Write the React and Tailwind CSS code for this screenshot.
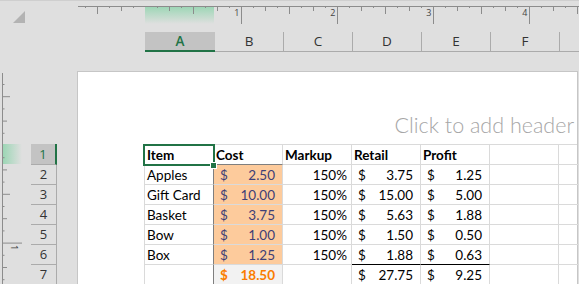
import React from "react";

const items = [
  ["Apples", "2.50", "150%", "3.75", "1.25"],
  ["Gift Card", "10.00", "150%", "15.00", "5.00"],
  ["Basket", "3.75", "150%", "5.63", "1.88"],
  ["Bow", "1.00", "150%", "1.50", "0.50"],
  ["Box", "1.25", "150%", "1.88", "0.63"],
];

function TopRuler() {
  const ticks = [];
  for (let k = -5; 145.5 + 12 * k < 579; k++) {
    if (k === 0) continue;
    const x = 145.5 + 12 * k;
    const len = k % 8 === 0 ? 18 : k % 4 === 0 ? 8 : k % 2 === 0 ? 5 : 2;
    ticks.push(
      <line key={k} x1={x} x2={x} y1={6} y2={6 + len} stroke="#8c8c8c" strokeWidth="1" />
    );
    if (k > 0 && k % 8 === 0) {
      ticks.push(
        <text key={"t" + k} x={x - 2} y={16} textAnchor="end" fontSize="9" fill="#444" fontFamily="Open Sans, sans-serif">
          {k / 8}
        </text>
      );
    }
  }
  return (
    <svg width="579" height="24" className="block">
      <defs>
        <linearGradient id="rg" x1="0" y1="0" x2="0" y2="1">
          <stop offset="0" stopColor="#9cd6b5" />
          <stop offset="1" stopColor="#dfdfdf" />
        </linearGradient>
      </defs>
      <line x1="0" x2="579" y1="0.5" y2="0.5" stroke="#cfcfcf" />
      <polygon points="25,11 25,23 13,23" fill="#b3b3b3" />
      <rect x="145" y="6.5" width="69" height="17.5" fill="url(#rg)" />
      <line x1="78" x2="579" y1="6.5" y2="6.5" stroke="#8c8c8c" />
      {ticks}
    </svg>
  );
}

function SideRuler() {
  const ticks = [];
  for (let k = -5; 145.5 + 12.2 * k < 284; k++) {
    if (k === 0) continue;
    const y = 145.5 + 12.2 * k - 71;
    const len = k % 8 === 0 ? 19 : k % 4 === 0 ? 7 : k % 2 === 0 ? 4 : 1.5;
    ticks.push(
      <line key={k} x1={3} x2={3 + len} y1={y} y2={y} stroke="#8c8c8c" strokeWidth="1" />
    );
    if (k > 0 && k % 8 === 0) {
      ticks.push(
        <text key={"t" + k} x={0} y={0} fontSize="9" fill="#444" fontFamily="Open Sans, sans-serif" transform={`translate(11 ${y + 2}) rotate(90)`}>
          {k / 8}
        </text>
      );
    }
  }
  return (
    <svg width="31" height="213" className="block shrink-0">
      <defs>
        <linearGradient id="sg" x1="0" y1="0" x2="1" y2="0">
          <stop offset="0" stopColor="#9cd6b5" />
          <stop offset="1" stopColor="#dfdfdf" />
        </linearGradient>
      </defs>
      <rect x="3" y="73" width="19" height="20" fill="url(#sg)" />
      <line x1="2.5" x2="2.5" y1="2" y2="213" stroke="#8c8c8c" />
      {ticks}
    </svg>
  );
}

function Money({ value, className = "" }) {
  return (
    <div className={`flex h-full items-end justify-between pl-[6px] pr-[7px] leading-[18px] ${className}`}>
      <span>$</span>
      <span>{value}</span>
    </div>
  );
}

export default function App() {
  const cols = ["B", "C", "D", "E", "F", ""];
  const cell = "h-full w-[69px] shrink-0 border-r border-b border-[#dadada]";

  return (
    <div className="relative h-[284px] w-[579px] overflow-hidden bg-[#dfdfdf] font-['Lato',sans-serif] text-black">
      <TopRuler />
      <div className="h-[8px]" />

      {/* column headers */}
      <div className="flex h-[20px] pl-[145px] font-['Open_Sans',sans-serif] text-[13.5px]">
        <div className="flex w-[70px] shrink-0 items-center justify-center border-b-2 border-[#217346] bg-[#c3c3c3] font-semibold text-[#217346]">
          A
        </div>
        {cols.map((c, i) => (
          <div key={i} className="flex w-[69px] shrink-0 items-center justify-center border-r border-b border-[#ababab] text-[#333]">
            {c}
          </div>
        ))}
      </div>
      <div className="h-[19px]" />

      <div className="flex h-[213px]">
        <SideRuler />

        {/* row headers */}
        <div className="w-[26px] shrink-0 font-['Open_Sans',sans-serif] text-[13px]">
          <div className="h-[73px]" />
          <div className="flex h-[21px] items-end justify-center border-r-2 border-b border-r-[#217346] border-b-[#ababab] bg-[#c3c3c3] pb-[1px] leading-[18px] text-[#217346]">
            1
          </div>
          {[2, 3, 4, 5, 6, 7].map((n) => (
            <div key={n} className="flex h-[20px] items-end justify-center border-r border-b border-[#ababab] pb-[1px] leading-[18px] text-[#333]">
              {n}
            </div>
          ))}
        </div>

        <div className="w-[20px] shrink-0" />

        {/* page */}
        <div className="w-[501px] shrink-0 border-l border-t border-r border-[#c6c6c6] bg-white">
          <div className="flex h-[72px] items-end justify-end pr-[3px] pb-[8px] text-[21.5px] leading-none font-light text-[#a6a6a6]">
            Click to add header
          </div>

          <div className="relative ml-[66px] border-l border-t border-[#dadada] text-[13.5px]">
            {/* header row */}
            <div className="flex h-[20px] font-bold">
              {["Item", "Cost", "Markup", "Retail", "Profit", "", ""].map((h, i) => (
                <div key={i} className={`${cell} flex items-end pl-[2px] leading-[18px] ${i === 1 ? "border-b-[#7f7f7f]" : ""}`}>
                  {h}
                </div>
              ))}
            </div>

            {items.map((r, ri) => (
              <div key={r[0]} className="flex h-[20px]">
                <div className={`${cell} flex items-end border-r-[#7f7f7f] pl-[2px] leading-[18px]`}>{r[0]}</div>
                <div className={`${cell} border-[#7f7f7f] bg-[#fdcb9c]`}>
                  <Money value={r[1]} className="text-[#3f3f76]" />
                </div>
                <div className={`${cell} flex items-end justify-end pr-[4px] leading-[18px]`}>{r[2]}</div>
                <div className={`${cell} ${ri === 4 ? "border-b-black" : ""}`}>
                  <Money value={r[3]} />
                </div>
                <div className={`${cell} ${ri === 4 ? "border-b-black" : ""}`}>
                  <Money value={r[4]} />
                </div>
                <div className={cell} />
                <div className={cell} />
              </div>
            ))}

            {/* totals */}
            <div className="flex h-[20px]">
              <div className={`${cell} border-r-[#7f7f7f]`} />
              <div className={`${cell} border-[#7f7f7f] bg-[#f2f2f2]`}>
                <Money value="18.50" className="font-bold text-[#fa7d00]" />
              </div>
              <div className={cell} />
              <div className={cell}>
                <Money value="27.75" />
              </div>
              <div className={cell}>
                <Money value="9.25" />
              </div>
              <div className={cell} />
              <div className={cell} />
            </div>

            {/* active cell */}
            <div className="pointer-events-none absolute top-[-1px] left-[-2px] h-[22px] w-[72px] border-2 border-[#217346]" />
            <div className="absolute top-[17px] left-[65px] h-[7px] w-[7px] border border-white bg-[#217346]" />
          </div>
        </div>
      </div>
    </div>
  );
}
